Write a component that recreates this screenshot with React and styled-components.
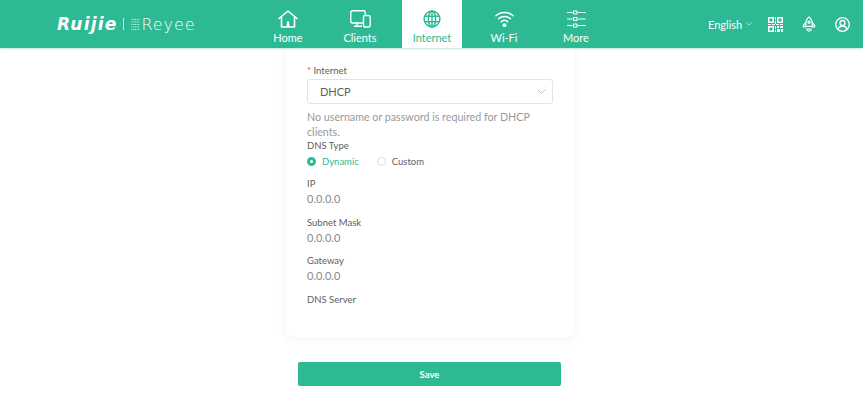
import React from "react";
import styled, { createGlobalStyle } from "styled-components";

const GREEN = "#2eb995";

const Global = createGlobalStyle`
  html, body { margin: 0; padding: 0; background: #fff; }
  body { font-family: Lato, "Open Sans", Arial, sans-serif; overflow: hidden; }
`;

const HomeIcon = () => (
  <svg width="20" height="18" viewBox="0 0 20 18" fill="none" stroke="currentColor" strokeWidth="1.6" strokeLinejoin="round" strokeLinecap="round">
    <path d="M1 8.500 10 1l9 7.500" />
    <path d="M3.500 7v10h13V7" />
    <path d="M8.700 17v-4.500a1.300 1.300 0 0 1 2.600 0V17z" fill="currentColor" stroke="none" />
  </svg>
);

const ClientsIcon = () => (
  <svg width="21" height="19" viewBox="0 0 21 19" fill="none" stroke="currentColor" strokeWidth="1.4" strokeLinejoin="round" strokeLinecap="round">
    <path d="M12.500 13H2.400A1.600 1.600 0 0 1 .8 11.400V2.400A1.600 1.600 0 0 1 2.400.8h11.200a1.600 1.600 0 0 1 1.600 1.600V4" />
    <path d="M7 13v3M4.500 16.200h7" />
    <rect x="13.500" y="5.500" width="6.700" height="11.500" rx="1.500" />
  </svg>
);

const GlobeIcon = () => (
  <svg width="18" height="18" viewBox="0 0 20 20" fill="none" stroke="currentColor" strokeWidth="1.600">
    <circle cx="10" cy="10" r="8.800" />
    <ellipse cx="10" cy="10" rx="4" ry="8.800" />
    <path d="M1.800 7h16.400M1.800 13h16.400M10 1.200v17.600" />
  </svg>
);

const WifiIcon = () => (
  <svg width="19" height="18" viewBox="0 0 20 19" fill="none" stroke="currentColor" strokeWidth="1.600" strokeLinecap="round">
    <path d="M1 6C6 1.400 14 1.400 19 6" />
    <path d="M3.800 9.300c3.500-3.200 8.900-3.200 12.400 0" />
    <path d="M6.700 12.300c2-1.700 4.600-1.700 6.600 0" />
    <circle cx="10" cy="16" r="2" fill="currentColor" stroke="none" />
  </svg>
);

const MoreIcon = () => (
  <svg width="19" height="18" viewBox="0 0 19 18" fill="none" stroke="currentColor" strokeWidth="1.200" strokeLinecap="round">
    <path d="M.6 2.500h4.400M11.500 2.500h6.800M.6 9h4.400M11.500 9h6.800M.6 15.500h4.400M11.500 15.500h6.800" />
    <rect x="6.500" y="1" width="3.500" height="3" rx=".5" />
    <rect x="6.500" y="7.500" width="3.500" height="3" rx=".5" />
    <rect x="6.500" y="14" width="3.500" height="3" rx=".5" />
  </svg>
);

const Chevron = ({ size = 6 }) => (
  <svg width={size} height={size * 0.6} viewBox="0 0 10 6" fill="none" stroke="currentColor" strokeWidth="1">
    <path d="M.5.500 5 5 9.500.500" />
  </svg>
);

const QrIcon = () => (
  <svg width="15" height="15" viewBox="0 0 15 15" fill="currentColor">
    <path fillRule="evenodd" d="M0 0h6v6H0zM1.500 1.500v3h3v-3zM9 0h6v6H9zM10.500 1.500v3h3v-3zM0 9h6v6H0zM1.500 10.500v3h3v-3z" />
    <path d="M7 0h1v3H7zM7 4h1v3H7zM0 7h3v1H0zM4 7h3v1H4zM8 7h3v1H8zM12 7h3v1h-3zM9 9h2v2H9zM12 9h3v2h-3zM7 9h1v3H7zM9 12h3v3H9zM13 12h2v3h-2zM7 13h1v2H7z" />
  </svg>
);

const RocketIcon = () => (
  <svg width="14" height="16" viewBox="0 0 15 17" fill="none" stroke="currentColor" strokeWidth="1.300" strokeLinejoin="round" strokeLinecap="round">
    <path d="M7.500 1C5 3 4 5.500 4 8.500V11h7V8.500C11 5.500 10 3 7.500 1Z" />
    <path d="M4 7 1.500 10v1.500H4M11 7l2.500 3v1.500H11" />
    <circle cx="7.500" cy="6.500" r="1.100" />
    <path d="M5.500 13.500v2M7.500 13.500v3M9.500 13.500v2" />
  </svg>
);

const UserIcon = () => (
  <svg width="15" height="15" viewBox="0 0 15 15" fill="none" stroke="currentColor" strokeWidth="1.300">
    <circle cx="7.500" cy="7.500" r="6.800" />
    <circle cx="7.500" cy="6" r="2.500" />
    <path d="M2.800 12.300c1-2.200 2.700-3.300 4.700-3.300s3.700 1.100 4.700 3.300" />
  </svg>
);

const navItems = [
  { label: "Home", icon: <HomeIcon /> },
  { label: "Clients", icon: <ClientsIcon /> },
  { label: "Internet", icon: <GlobeIcon />, active: true },
  { label: "Wi-Fi", icon: <WifiIcon /> },
  { label: "More", icon: <MoreIcon /> },
];

const fields = [
  { label: "IP", value: "0.0.0.0" },
  { label: "Subnet Mask", value: "0.0.0.0" },
  { label: "Gateway", value: "0.0.0.0" },
  { label: "DNS Server", value: "" },
];

const App = () => (
  <Page>
    <Global />
    <Header>
      <Logo>
        <Ruijie>Ruijie</Ruijie>
        <Divider />
        <LogoMark viewBox="0 0 9 13" fill="none" stroke="currentColor" strokeWidth="1" strokeDasharray="1 .7">
          <path d="M.5 1.500h8M.5 4h8M.5 6.500h8M.5 9h8M.5 11.500h8" />
        </LogoMark>
        <Reyee>Reyee</Reyee>
      </Logo>
      <Nav>
        {navItems.map((item) => (
          <NavItem key={item.label} $active={item.active}>
            <NavIcon>{item.icon}</NavIcon>
            <span>{item.label}</span>
          </NavItem>
        ))}
      </Nav>
      <Tools>
        <Lang>
          English <Chevron />
        </Lang>
        <QrIcon />
        <RocketIcon />
        <UserIcon />
      </Tools>
    </Header>
    <Main>
      <Card>
        <Label>
          <Required>*</Required> Internet
        </Label>
        <Select>
          DHCP
          <SelectArrow>
            <Chevron size={9} />
          </SelectArrow>
        </Select>
        <Help>No username or password is required for DHCP clients.</Help>
        <Label>DNS Type</Label>
        <Radios>
          <Radio $checked>
            <Dot $checked />
            Dynamic
          </Radio>
          <Radio>
            <Dot />
            Custom
          </Radio>
        </Radios>
        <Fields>
          {fields.map((f) => (
            <Field key={f.label}>
              <Label>{f.label}</Label>
              <Value>{f.value}</Value>
            </Field>
          ))}
        </Fields>
      </Card>
      <SaveButton>Save</SaveButton>
    </Main>
  </Page>
);

const Page = styled.div`
  width: 863px;
  height: 413px;
  overflow: hidden;
  display: flex;
  flex-direction: column;
`;

const Header = styled.header`
  height: 48px;
  flex: none;
  background: ${GREEN};
  display: flex;
  align-items: stretch;
  color: #fff;
  padding-left: 57px;
  box-shadow: 0 1px 2px rgba(46, 185, 149, 0.3);
  position: relative;
`;

const Logo = styled.div`
  width: 201px;
  display: flex;
  align-items: center;
`;

const Ruijie = styled.span`
  font-family: "DejaVu Sans", sans-serif;
  font-size: 17px;
  font-weight: 700;
  font-style: italic;
  letter-spacing: 1.2px;
`;

const Divider = styled.i`
  width: 1px;
  height: 12px;
  background: rgba(255, 255, 255, 0.7);
  margin: 0 7px 0 6px;
`;

const LogoMark = styled.svg`
  width: 9px;
  height: 13px;
  margin-right: 1px;
  opacity: 0.8;
`;

const Reyee = styled.span`
  font-family: "DejaVu Sans", sans-serif;
  font-size: 16px;
  font-weight: 300;
  letter-spacing: 0.9px;
`;

const Nav = styled.nav`
  display: flex;
  gap: 12px;
`;

const NavItem = styled.div`
  width: 60px;
  display: flex;
  flex-direction: column;
  align-items: center;
  font-size: 11px;
  line-height: 14px;
  padding-top: 10px;
  box-sizing: border-box;
  background: ${(p) => (p.$active ? "#fff" : "transparent")};
  color: ${(p) => (p.$active ? GREEN : "#fff")};
`;

const NavIcon = styled.div`
  height: 21px;
  display: flex;
  align-items: flex-start;
`;

const Tools = styled.div`
  display: flex;
  align-items: center;
  margin-left: 102px;
  gap: 19px;
`;

const Lang = styled.div`
  display: flex;
  align-items: center;
  gap: 4px;
  font-size: 11px;
  margin-right: -3px;
`;

const Main = styled.main`
  flex: 1;
  display: flex;
  flex-direction: column;
  align-items: center;
  margin-right: 3px;
`;

const Card = styled.section`
  width: 288px;
  height: 289px;
  flex: none;
  box-sizing: border-box;
  padding: 16px 21px 0;
  border-radius: 0 0 8px 8px;
  background: #fff;
  box-shadow: 0 2px 8px rgba(90, 90, 200, 0.07);
`;

const Label = styled.div`
  font-size: 9.500px;
  line-height: 14px;
  color: #606060;
`;

const Required = styled.span`
  color: #f5483b;
`;

const Select = styled.div`
  position: relative;
  height: 25px;
  margin-top: 1px;
  box-sizing: border-box;
  border: 1px solid #e4e4e4;
  border-radius: 3px;
  padding-left: 12px;
  font-size: 11px;
  line-height: 23px;
  color: #606060;
`;

const SelectArrow = styled.span`
  position: absolute;
  right: 6px;
  top: 0;
  bottom: 0;
  display: flex;
  align-items: center;
  color: #bbb;
`;

const Help = styled.p`
  margin: 5px 0 0;
  font-size: 10.700px;
  line-height: 15px;
  color: #999;
  width: 230px;
`;

const Radios = styled.div`
  display: flex;
  gap: 18px;
  height: 16px;
  align-items: center;
`;

const Radio = styled.div`
  display: flex;
  align-items: center;
  gap: 6px;
  font-size: 9.500px;
  color: ${(p) => (p.$checked ? GREEN : "#606060")};
`;

const Dot = styled.i`
  width: 9px;
  height: 9px;
  box-sizing: border-box;
  border-radius: 50%;
  background: #fff;
  border: ${(p) => (p.$checked ? `3px solid ${GREEN}` : "1px solid #ddd")};
`;

const Fields = styled.div`
  margin-top: 8px;
  display: flex;
  flex-direction: column;
  gap: 9px;
`;

const Field = styled.div`
  min-height: 29.500px;
`;

const Value = styled.div`
  margin-top: 1px;
  font-size: 11px;
  line-height: 14px;
  color: #888;
`;

const SaveButton = styled.button`
  width: 263px;
  height: 24px;
  margin: 25px 1px 0 0;
  border: 0;
  border-radius: 2px;
  background: ${GREEN};
  color: #fff;
  font-family: inherit;
  font-size: 9.500px;
  font-weight: 700;
`;

export default App;
